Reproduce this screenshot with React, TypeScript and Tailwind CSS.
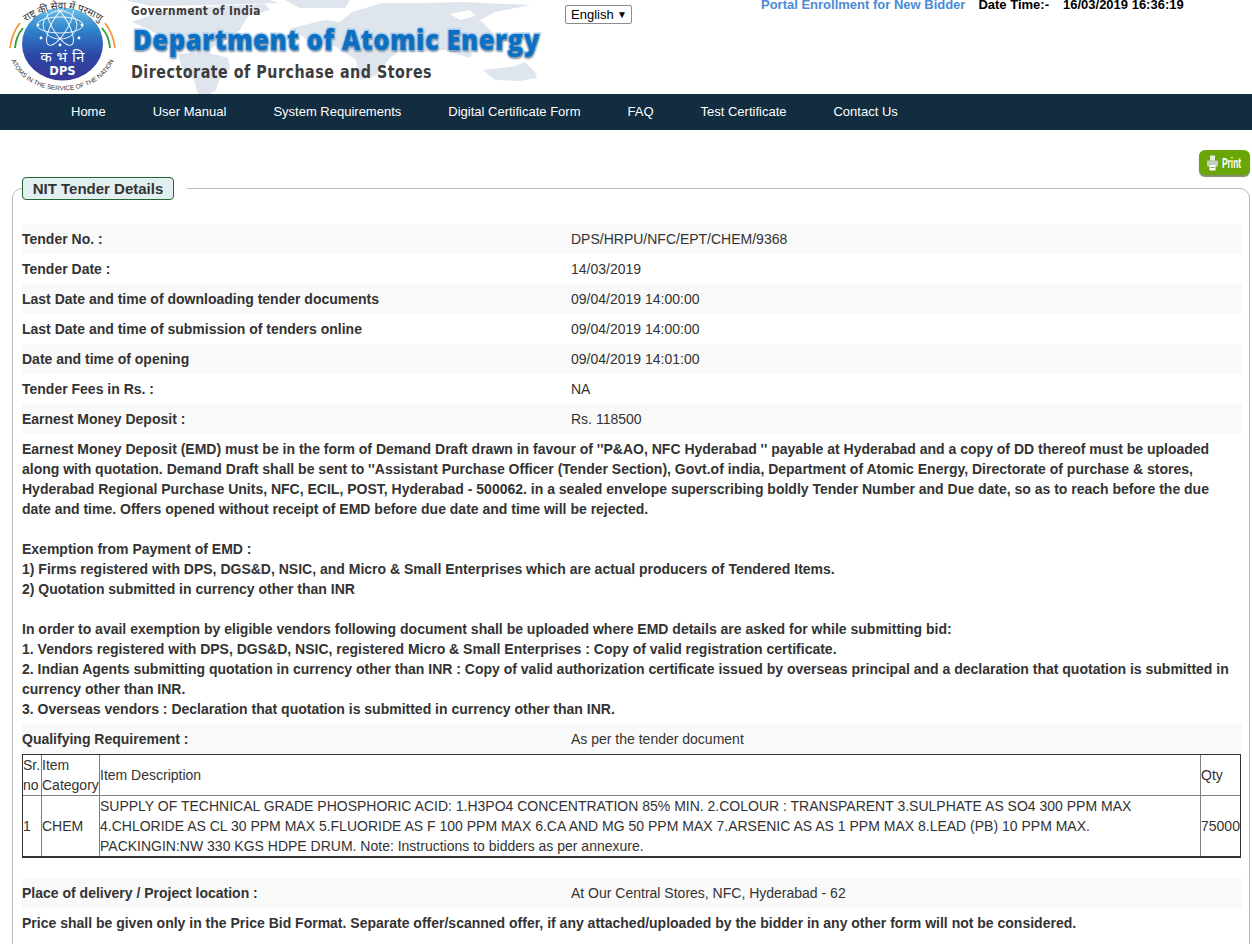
import React from "react";

const rows1: [string, string, boolean][] = [
  ["Tender No. :", "DPS/HRPU/NFC/EPT/CHEM/9368", true],
  ["Tender Date :", "14/03/2019", false],
  ["Last Date and time of downloading tender documents", "09/04/2019 14:00:00", true],
  ["Last Date and time of submission of tenders online", "09/04/2019 14:00:00", false],
  ["Date and time of opening", "09/04/2019 14:01:00", true],
  ["Tender Fees in Rs. :", "NA", false],
  ["Earnest Money Deposit :", "Rs. 118500", true],
];

function Row({ label, value, striped }: { label: string; value: string; striped: boolean }) {
  return (
    <div className={`flex h-[30px] items-center ${striped ? "bg-[#f9f9f9]" : "bg-white"}`}>
      <div className="w-[549px] font-bold">{label}</div>
      <div>{value}</div>
    </div>
  );
}

function Logo() {
  return (
    <svg width="123" height="94" viewBox="0 0 123 94" className="shrink-0">
      <defs>
        <linearGradient id="lg" x1="0" y1="0" x2="0" y2="1">
          <stop offset="0" stopColor="#6cc0ea" />
          <stop offset="0.3" stopColor="#2f84cb" />
          <stop offset="0.65" stopColor="#2c48a6" />
          <stop offset="1" stopColor="#3a3596" />
        </linearGradient>
        <path id="topArc" d="M 19 27 Q 62 -9 107 27" />
        <path id="botArc" d="M 9 48 A 53 42 0 0 0 116 48" />
      </defs>
      <ellipse cx="62.5" cy="44" rx="40.5" ry="36.5" fill="url(#lg)" />
      <g fill="none" stroke="#ffffff" strokeWidth="0.9" transform="translate(60 25)">
        <ellipse rx="23" ry="8" />
        <ellipse rx="23" ry="8" transform="rotate(60)" />
        <ellipse rx="23" ry="8" transform="rotate(120)" />
        <ellipse rx="17" ry="14" />
      </g>
      <g fill="#ffffff">
        <circle cx="38" cy="25" r="1.4" />
        <circle cx="82" cy="25" r="1.4" />
        <circle cx="41" cy="38" r="1.4" />
        <circle cx="79" cy="38" r="1.4" />
        <circle cx="60" cy="45" r="1.4" />
        <circle cx="48" cy="6" r="1.2" />
        <circle cx="72" cy="6" r="1.2" />
      </g>
      <text x="62.5" y="62" textAnchor="middle" fontSize="15" letterSpacing="0.5" fill="#ffffff" fontFamily="'Noto Sans','DejaVu Sans',sans-serif">
        क भं नि
      </text>
      <text x="62.5" y="75" textAnchor="middle" fontSize="11.5" fontWeight="700" fill="#ffffff" fontFamily="'DejaVu Sans',sans-serif">
        DPS
      </text>
      <path d="M 10 48 Q 12 33 20 23" fill="none" stroke="#f0993a" strokeWidth="1.8" />
      <path d="M 15 48 Q 16 36 23 28" fill="none" stroke="#2e9a3c" strokeWidth="1.8" />
      <path d="M 115 48 Q 113 33 105 23" fill="none" stroke="#f0993a" strokeWidth="1.8" />
      <path d="M 110 48 Q 109 36 102 28" fill="none" stroke="#2e9a3c" strokeWidth="1.8" />
      <text fontSize="10" fill="#333333" fontFamily="'Noto Sans','DejaVu Sans',sans-serif">
        <textPath href="#topArc" startOffset="50%" textAnchor="middle">
          राष्ट्र की सेवा में परमाणु
        </textPath>
      </text>
      <text fontSize="6.4" fill="#333333" fontFamily="'Liberation Sans',sans-serif">
        <textPath href="#botArc" startOffset="50%" textAnchor="middle">
          ATOMS IN THE SERVICE OF THE NATION
        </textPath>
      </text>
    </svg>
  );
}

function WorldMap() {
  return (
    <svg className="absolute left-0 top-0" width="442" height="94" viewBox="3 0 442 94">
      <g fill="#dfe5ed">
        <path d="M 12 22 L 40 12 L 70 8 L 100 6 L 145 4 L 150 10 L 128 16 L 120 30 L 105 40 L 88 50 L 72 46 L 50 40 L 30 30 Z" />
        <path d="M 5 0 L 150 0 L 160 3 L 100 5 L 30 6 Z" />
        <path d="M 58 54 L 85 52 L 108 58 L 110 68 L 100 78 L 96 90 L 90 94 L 78 94 L 74 80 L 62 68 Z" />
        <path d="M 172 28 L 205 20 L 220 22 L 232 12 L 262 3 L 300 3 L 345 2 L 385 4 L 410 5 L 375 12 L 360 20 L 375 35 L 355 45 L 350 58 L 325 50 L 300 52 L 285 46 L 270 58 L 255 76 L 240 80 L 236 60 L 215 46 L 190 42 Z" />
        <path d="M 363 70 L 380 68 L 395 66 L 405 62 L 415 72 L 417 78 L 400 81 L 375 80 Z" />
        <path d="M 165 0 L 230 0 L 225 8 L 180 8 Z" />
      </g>
      <g fill="#ffffff">
        <path d="M 330 14 L 350 10 L 355 16 L 340 20 Z" />
      </g>
    </svg>
  );
}

export default function App() {
  return (
    <div className="h-[944px] overflow-hidden bg-white font-['Liberation_Sans',Arial,sans-serif] text-[14px] leading-5 text-[#333333]">
      <header className="flex h-[94px] overflow-hidden">
        <Logo />
        <div className="relative h-[94px] w-[442px] shrink-0 pl-[8px]">
          <WorldMap />
          <div className="relative origin-left scale-x-[0.81] whitespace-nowrap pt-[3px] font-['DejaVu_Sans',sans-serif] text-[13px] font-bold leading-4 tracking-[0.5px] text-[#3c3c3c]">
            Government of India
          </div>
          <div className="relative ml-[2px] mt-[2px] origin-left scale-x-[0.913] whitespace-nowrap font-['Open_Sans',sans-serif] text-[28px] font-extrabold leading-[36px] tracking-[0.6px] text-[#0b6fc4] [-webkit-text-stroke:3px_#a6cdee] [paint-order:stroke_fill] [text-shadow:1px_2px_2px_#8a9aa8]">
            Department of Atomic Energy
          </div>
          <div className="relative mt-[3px] origin-left scale-x-[0.84] whitespace-nowrap font-['DejaVu_Sans',sans-serif] text-[17px] font-bold leading-6 tracking-[0.6px] text-[#3c3c3c]">
            Directorate of Purchase and Stores
          </div>
        </div>
        <div className="mt-[5px] flex h-[19px] w-[67px] shrink-0 items-center justify-between rounded-[2px] border border-[#8c8c8c] pl-[5px] pr-[4px] text-[13px] text-black">
          <span>English</span>
          <span className="text-[10px]">▼</span>
        </div>
        <div className="ml-[129px] mt-[-5px] flex h-5 shrink-0 items-center whitespace-nowrap text-[13px] font-bold">
          <span className="text-[#4a8bd6]">Portal Enrollment for New Bidder</span>
          <span className="ml-[13px] text-black">Date Time:-</span>
          <span className="ml-[14px] text-black">16/03/2019 16:36:19</span>
        </div>
      </header>

      <nav className="flex h-[36px] items-center gap-[47px] bg-[#122c40] pl-[71px] text-[13px] text-white">
        <span>Home</span>
        <span>User Manual</span>
        <span>System Requirements</span>
        <span>Digital Certificate Form</span>
        <span>FAQ</span>
        <span>Test Certificate</span>
        <span>Contact Us</span>
      </nav>

      <div className="flex justify-end pr-[2px] pt-[20px]">
        <div className="flex h-[25px] w-[51px] items-center gap-[4px] overflow-hidden rounded-[6px] bg-[#6aa608] pl-[8px] text-[14px] font-bold text-white shadow-[0_2px_1px_#7f8f70]">
          <svg width="11" height="16" viewBox="0 0 11 16" fill="#e6ecdf" className="shrink-0">
            <rect x="3" y="0.5" width="5" height="5" />
            <rect x="0" y="5.5" width="11" height="6" rx="1" fill="#c4cfbd" />
            <rect x="2.5" y="10" width="6" height="5.5" fill="#ffffff" />
            <rect x="3.5" y="12" width="4" height="1" fill="#8aa36a" />
          </svg>
          <span className="origin-left scale-x-[0.6]">Print</span>
        </div>
      </div>

      <fieldset className="ml-[12px] mt-[2px] w-[1238px] rounded-[10px] border border-[#bbbbbb] pb-[40px] pl-[9px] pr-[7px] pt-[24px]">
        <legend className="pr-[13px]">
          <div className="flex h-[23px] w-[152px] items-center justify-center rounded-[4px] border border-[#23662f] bg-[#e1eff0] text-[15px] font-bold leading-5">
            NIT Tender Details
          </div>
        </legend>

        {rows1.map(([l, v, s]) => (
          <Row key={l} label={l} value={v} striped={s} />
        ))}

        <div className="py-[5px] pr-[4px] font-bold">
          Earnest Money Deposit (EMD) must be in the form of Demand Draft drawn in favour of ''P&amp;AO, NFC Hyderabad '' payable at Hyderabad and a copy of DD thereof must be uploaded along with quotation. Demand Draft shall be sent to ''Assistant Purchase Officer (Tender Section), Govt.of india, Department of Atomic Energy, Directorate of purchase &amp; stores, Hyderabad Regional Purchase Units, NFC, ECIL, POST, Hyderabad - 500062. in a sealed envelope superscribing boldly Tender Number and Due date, so as to reach before the due date and time. Offers opened without receipt of EMD before due date and time will be rejected.
          <br />
          <br />
          Exemption from Payment of EMD :
          <br />
          1) Firms registered with DPS, DGS&amp;D, NSIC, and Micro &amp; Small Enterprises which are actual producers of Tendered Items.
          <br />
          2) Quotation submitted in currency other than INR
          <br />
          <br />
          In order to avail exemption by eligible vendors following document shall be uploaded where EMD details are asked for while submitting bid:
          <br />
          1. Vendors registered with DPS, DGS&amp;D, NSIC, registered Micro &amp; Small Enterprises : Copy of valid registration certificate.
          <br />
          2. Indian Agents submitting quotation in currency other than INR : Copy of valid authorization certificate issued by overseas principal and a declaration that quotation is submitted in currency other than INR.
          <br />
          3. Overseas vendors : Declaration that quotation is submitted in currency other than INR.
        </div>

        <Row label="Qualifying Requirement :" value="As per the tender document" striped />

        <table className="w-[1219px] table-fixed border-separate border-spacing-0 border border-b-2 border-[#333333]">
          <colgroup>
            <col className="w-[19px]" />
            <col className="w-[58px]" />
            <col />
            <col className="w-[39px]" />
          </colgroup>
          <tbody>
            <tr>
              <td className="border-b border-r border-[#808080] p-0">Sr. no</td>
              <td className="border-b border-r border-[#808080] p-0">Item Category</td>
              <td className="border-b border-r border-[#808080] p-0">Item Description</td>
              <td className="border-b border-[#808080] p-0">Qty</td>
            </tr>
            <tr>
              <td className="border-r border-[#808080] p-0">1</td>
              <td className="border-r border-[#808080] p-0">CHEM</td>
              <td className="border-r border-[#808080] p-0">
                SUPPLY OF TECHNICAL GRADE PHOSPHORIC ACID: 1.H3PO4 CONCENTRATION 85% MIN. 2.COLOUR : TRANSPARENT 3.SULPHATE AS SO4 300 PPM MAX 4.CHLORIDE AS CL 30 PPM MAX 5.FLUORIDE AS F 100 PPM MAX 6.CA AND MG 50 PPM MAX 7.ARSENIC AS AS 1 PPM MAX 8.LEAD (PB) 10 PPM MAX.
                <br />
                PACKINGIN:NW 330 KGS HDPE DRUM. Note: Instructions to bidders as per annexure.
              </td>
              <td className="p-0">75000</td>
            </tr>
          </tbody>
        </table>

        <div className="mt-[20px]">
          <Row label="Place of delivery / Project location :" value="At Our Central Stores, NFC, Hyderabad - 62" striped />
        </div>
        <div className="py-[5px] font-bold">
          Price shall be given only in the Price Bid Format. Separate offer/scanned offer, if any attached/uploaded by the bidder in any other form will not be considered.
        </div>
      </fieldset>
    </div>
  );
}
